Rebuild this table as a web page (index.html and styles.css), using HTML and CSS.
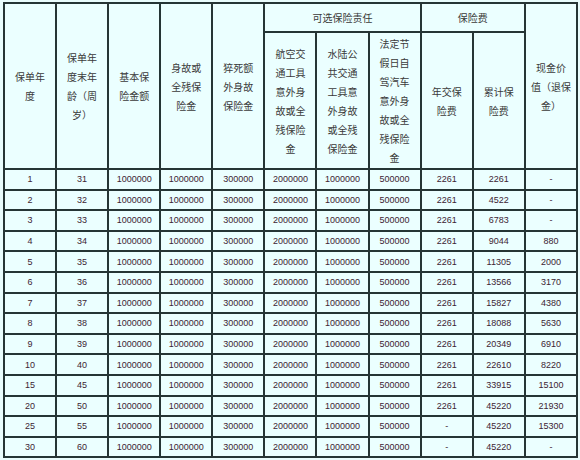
FILE: index.html
```html
<!DOCTYPE html>
<html lang="zh">
<head>
<meta charset="utf-8">
<link rel="stylesheet" href="styles.css">
</head>
<body>
<table class="plan">
  <thead>
    <tr class="h1">
      <th rowspan="2">保单年度</th>
      <th rowspan="2">保单年度末年龄（周岁）</th>
      <th rowspan="2">基本保险金额</th>
      <th rowspan="2">身故或全残保险金</th>
      <th rowspan="2">猝死额外身故保险金</th>
      <th colspan="3">可选保险责任</th>
      <th colspan="2">保险费</th>
      <th rowspan="2" class="wide">现金价<br>值（退保<br>金）</th>
    </tr>
    <tr class="h2">
      <th>航空交通工具意外身故或全残保险金</th>
      <th>水陆公共交通工具意外身故或全残保险金</th>
      <th>法定节假日自驾汽车意外身故或全残保险金</th>
      <th>年交保险费</th>
      <th>累计保险费</th>
    </tr>
  </thead>
  <tbody>
    <tr><td>1</td><td>31</td><td>1000000</td><td>1000000</td><td>300000</td><td>2000000</td><td>1000000</td><td>500000</td><td>2261</td><td>2261</td><td>-</td></tr>
    <tr><td>2</td><td>32</td><td>1000000</td><td>1000000</td><td>300000</td><td>2000000</td><td>1000000</td><td>500000</td><td>2261</td><td>4522</td><td>-</td></tr>
    <tr><td>3</td><td>33</td><td>1000000</td><td>1000000</td><td>300000</td><td>2000000</td><td>1000000</td><td>500000</td><td>2261</td><td>6783</td><td>-</td></tr>
    <tr><td>4</td><td>34</td><td>1000000</td><td>1000000</td><td>300000</td><td>2000000</td><td>1000000</td><td>500000</td><td>2261</td><td>9044</td><td>880</td></tr>
    <tr><td>5</td><td>35</td><td>1000000</td><td>1000000</td><td>300000</td><td>2000000</td><td>1000000</td><td>500000</td><td>2261</td><td>11305</td><td>2000</td></tr>
    <tr><td>6</td><td>36</td><td>1000000</td><td>1000000</td><td>300000</td><td>2000000</td><td>1000000</td><td>500000</td><td>2261</td><td>13566</td><td>3170</td></tr>
    <tr><td>7</td><td>37</td><td>1000000</td><td>1000000</td><td>300000</td><td>2000000</td><td>1000000</td><td>500000</td><td>2261</td><td>15827</td><td>4380</td></tr>
    <tr><td>8</td><td>38</td><td>1000000</td><td>1000000</td><td>300000</td><td>2000000</td><td>1000000</td><td>500000</td><td>2261</td><td>18088</td><td>5630</td></tr>
    <tr><td>9</td><td>39</td><td>1000000</td><td>1000000</td><td>300000</td><td>2000000</td><td>1000000</td><td>500000</td><td>2261</td><td>20349</td><td>6910</td></tr>
    <tr><td>10</td><td>40</td><td>1000000</td><td>1000000</td><td>300000</td><td>2000000</td><td>1000000</td><td>500000</td><td>2261</td><td>22610</td><td>8220</td></tr>
    <tr><td>15</td><td>45</td><td>1000000</td><td>1000000</td><td>300000</td><td>2000000</td><td>1000000</td><td>500000</td><td>2261</td><td>33915</td><td>15100</td></tr>
    <tr><td>20</td><td>50</td><td>1000000</td><td>1000000</td><td>300000</td><td>2000000</td><td>1000000</td><td>500000</td><td>2261</td><td>45220</td><td>21930</td></tr>
    <tr><td>25</td><td>55</td><td>1000000</td><td>1000000</td><td>300000</td><td>2000000</td><td>1000000</td><td>500000</td><td>-</td><td>45220</td><td>15300</td></tr>
    <tr><td>30</td><td>60</td><td>1000000</td><td>1000000</td><td>300000</td><td>2000000</td><td>1000000</td><td>500000</td><td>-</td><td>45220</td><td>-</td></tr>
  </tbody>
</table>
</body>
</html>
```
FILE: styles.css
```css
html, body {
  margin: 0;
  background: #e8fcfc;
}
body {
  padding: 2px 0 0 3px;
}
.plan {
  border-collapse: collapse;
  table-layout: fixed;
  width: 575px;
  background: #ebffff;
  border: 2px solid #253535;
}
.plan th,
.plan td {
  border: 2px solid #253535;
  text-align: center;
  vertical-align: middle;
}
.plan th {
  font-family: "Noto Sans CJK SC", "Noto Sans", sans-serif;
  font-size: 10px;
  font-weight: normal;
  line-height: 19px;
  color: #3a3a3a;
  padding: 0 6px;
}
.plan th.wide {
  padding: 0 2px;
  white-space: nowrap;
}
.plan .h1 {
  height: 29px;
}
.plan .h2 {
  height: 137px;
}
.plan td {
  font-family: "Liberation Sans", Arial, sans-serif;
  font-size: 9px;
  color: #3d2433;
  padding: 0;
  height: 18.6px;
  line-height: 12px;
}
```
